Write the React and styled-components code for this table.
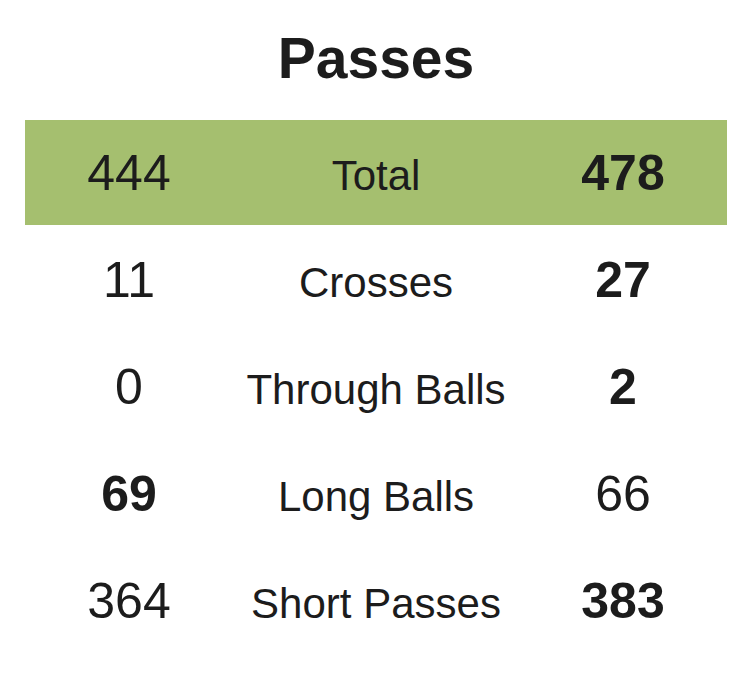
import React from "react";
import styled, { createGlobalStyle } from "styled-components";

const GlobalStyle = createGlobalStyle`
  html, body {
    margin: 0;
    padding: 0;
    background: #ffffff;
  }
  body {
    font-family: "Liberation Sans", Arial, Helvetica, sans-serif;
    color: #1c1c1c;
  }
`;

const Page = styled.main`
  width: 730px;
  padding: 25px 3px 0 25px;
  box-sizing: border-box;
`;

const Title = styled.h1`
  margin: 0 0 29px;
  font-size: 57px;
  font-weight: 700;
  line-height: 66px;
  text-align: center;
  color: #1c1c1c;
`;

const StatRow = styled.div`
  display: grid;
  grid-template-columns: 208px 1fr 208px;
  align-items: baseline;
  box-sizing: border-box;
  height: ${({ $first }) => ($first ? "105px" : "107px")};
  padding-top: ${({ $first }) => ($first ? "24px" : "26px")};
  background: ${({ $highlight }) => ($highlight ? "#a5bf6f" : "transparent")};
`;

const Value = styled.span`
  text-align: center;
  font-size: 50px;
  line-height: normal;
  font-weight: ${({ $bold }) => ($bold ? 700 : 400)};
`;

const Label = styled.span`
  text-align: center;
  font-size: 42px;
  line-height: normal;
  white-space: nowrap;
`;

const stats = [
  { label: "Total", home: 444, away: 478 },
  { label: "Crosses", home: 11, away: 27 },
  { label: "Through Balls", home: 0, away: 2 },
  { label: "Long Balls", home: 69, away: 66 },
  { label: "Short Passes", home: 364, away: 383 },
];

const App = () => {
  return (
    <>
      <GlobalStyle />
      <Page>
        <Title>Passes</Title>
        {stats.map((s, i) => (
          <StatRow key={s.label} $first={i === 0} $highlight={i === 0}>
            <Value $bold={s.home > s.away}>{s.home}</Value>
            <Label>{s.label}</Label>
            <Value $bold={s.away > s.home}>{s.away}</Value>
          </StatRow>
        ))}
      </Page>
    </>
  );
};

export default App;
